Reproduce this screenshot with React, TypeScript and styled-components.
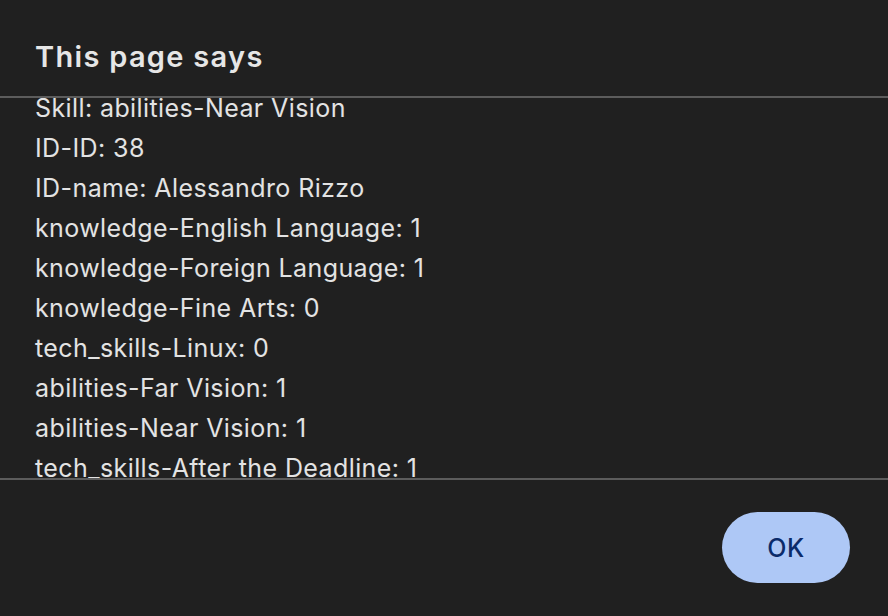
import React from "react";
import styled, { createGlobalStyle } from "styled-components";

const Global = createGlobalStyle`
  html, body { margin: 0; padding: 0; background: #202020; }
  body { font-family: Inter, "Noto Sans", sans-serif; -webkit-font-smoothing: antialiased; }
`;

const Dialog = styled.div`
  width: 888px;
  height: 616px;
  background: #202020;
  color: #e3e3e3;
  display: flex;
  flex-direction: column;
`;

const Header = styled.div`
  height: 98px;
  box-sizing: border-box;
  padding: 37px 0 0 35px;
  border-bottom: 2px solid #5c5c5c;
`;

const Title = styled.h1`
  margin: 0;
  font-size: 29px;
  font-weight: 600;
  line-height: 40px;
  letter-spacing: 1.3px;
  color: #e6e6e6;
`;

const Body = styled.div`
  height: 382px;
  overflow: hidden;
  border-bottom: 2px solid #5c5c5c;
  box-sizing: border-box;
`;

const Lines = styled.div`
  margin-top: -10px;
  padding-left: 35px;
  display: flex;
  flex-direction: column;
`;

const Line = styled.div`
  font-size: 25px;
  line-height: 40px;
  font-weight: 400;
  letter-spacing: 0.4px;
  white-space: nowrap;
`;

const Footer = styled.div`
  flex: 1;
  display: flex;
  justify-content: flex-end;
  align-items: flex-start;
  padding: 32px 38px 0 0;
`;

const OkButton = styled.button`
  width: 128px;
  height: 71px;
  border: none;
  border-radius: 36px;
  background: #aec8f6;
  color: #0b2b6a;
  font-family: Inter, "Noto Sans", sans-serif;
  font-size: 25px;
  font-weight: 500;
  letter-spacing: 0.5px;
  cursor: pointer;
`;

const lines = [
  "Skill: abilities-Near Vision",
  "ID-ID: 38",
  "ID-name: Alessandro Rizzo",
  "knowledge-English Language: 1",
  "knowledge-Foreign Language: 1",
  "knowledge-Fine Arts: 0",
  "tech_skills-Linux: 0",
  "abilities-Far Vision: 1",
  "abilities-Near Vision: 1",
  "tech_skills-After the Deadline: 1",
];

export default function App() {
  return (
    <>
      <Global />
      <Dialog>
        <Header>
          <Title>This page says</Title>
        </Header>
        <Body>
          <Lines>
            {lines.map((l) => (
              <Line key={l}>{l}</Line>
            ))}
          </Lines>
        </Body>
        <Footer>
          <OkButton>OK</OkButton>
        </Footer>
      </Dialog>
    </>
  );
}
